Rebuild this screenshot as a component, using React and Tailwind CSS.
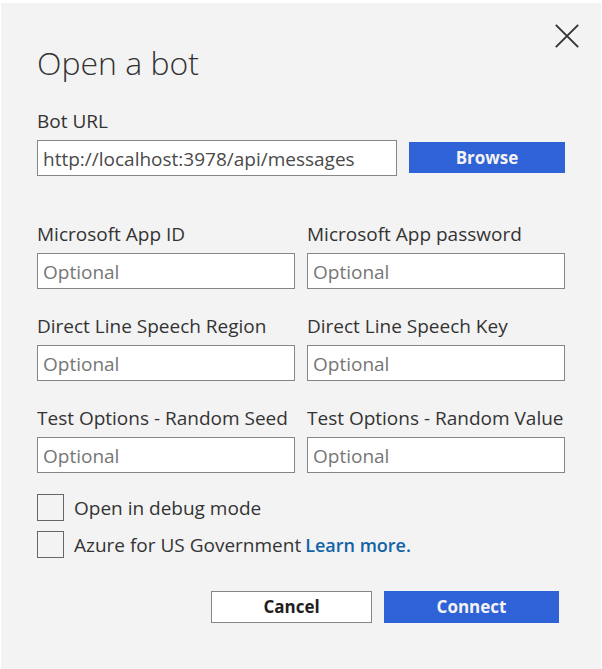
import { useId } from "react";

function Field({ label, className = "", ...inputProps }) {
  const id = useId();
  return (
    <div className={`min-w-0 ${className}`}>
      <label htmlFor={id} className="mb-[5px] block truncate text-[19px] leading-7 text-[#333333]">
        {label}
      </label>
      <input
        id={id}
        type="text"
        className="block h-9 w-full border border-[#868686] bg-white px-[5px] pt-[2px] text-[19px] text-[#4a4a4a] placeholder:text-[#767676]"
        {...inputProps}
      />
    </div>
  );
}

function CheckRow({ label, children }) {
  const id = useId();
  return (
    <div className="flex h-[27px] items-center whitespace-nowrap">
      <input
        id={id}
        type="checkbox"
        className="size-[27px] shrink-0 appearance-none border border-[#666666] bg-[#f3f3f3] checked:bg-[#2f62d6]"
      />
      <label htmlFor={id} className="ml-[10px] text-[19px] leading-7 text-[#333333]">
        {label}
      </label>
      {children}
    </div>
  );
}

export default function App() {
  return (
    <div className="min-h-screen bg-white px-px pt-[3px] font-['Open_Sans','Noto_Sans',sans-serif]">
      <main
        role="dialog"
        aria-labelledby="dialog-title"
        className="relative min-h-[calc(100vh-3px)] bg-[#f3f3f3] px-9 pt-9 pb-11"
      >
        <button type="button" aria-label="Close" className="absolute top-[21px] right-[22px] size-6">
          <svg viewBox="0 0 24 24" className="size-6" fill="none" stroke="#333333" strokeWidth="1.9">
            <path d="M0.8 0.8 L23.2 23.2 M23.2 0.8 L0.8 23.2" />
          </svg>
        </button>
        <h1 id="dialog-title" className="text-[32px] leading-12 font-light text-[#333333]">
          Open a bot
        </h1>
        <form className="mt-5">
          <div className="flex items-end gap-3">
            <Field label="Bot URL" className="flex-1" defaultValue="http://localhost:3978/api/messages" />
            <button
              type="button"
              className="mb-[3px] h-[31px] w-[156px] bg-[#2f62d6] text-[17px] font-bold text-[#f3f3f3]"
            >
              Browse
            </button>
          </div>
          <div className="mt-11 grid grid-cols-2 gap-x-3 gap-y-[23px]">
            <Field label="Microsoft App ID" placeholder="Optional" />
            <Field label="Microsoft App password" placeholder="Optional" />
            <Field label="Direct Line Speech Region" placeholder="Optional" />
            <Field label="Direct Line Speech Key" placeholder="Optional" />
            <Field label="Test Options - Random Seed" placeholder="Optional" />
            <Field label="Test Options - Random Value" placeholder="Optional" />
          </div>
          <div className="mt-[21px] flex flex-col gap-[10px]">
            <CheckRow label="Open in debug mode" />
            <CheckRow label="Azure for US Government">
              <a href="#learn-more" className="ml-1 text-[18px] leading-7 font-semibold text-[#1063a5]">
                Learn more.
              </a>
            </CheckRow>
          </div>
          <div className="mt-[33px] mr-[6px] flex justify-end gap-3">
            <button
              type="button"
              className="h-8 w-[161px] border border-[#868686] bg-white text-[17px] font-bold text-[#1e1e1e]"
            >
              Cancel
            </button>
            <button type="submit" className="h-8 w-[175px] bg-[#2f62d6] text-[17px] font-bold text-[#f3f3f3]">
              Connect
            </button>
          </div>
        </form>
      </main>
    </div>
  );
}
